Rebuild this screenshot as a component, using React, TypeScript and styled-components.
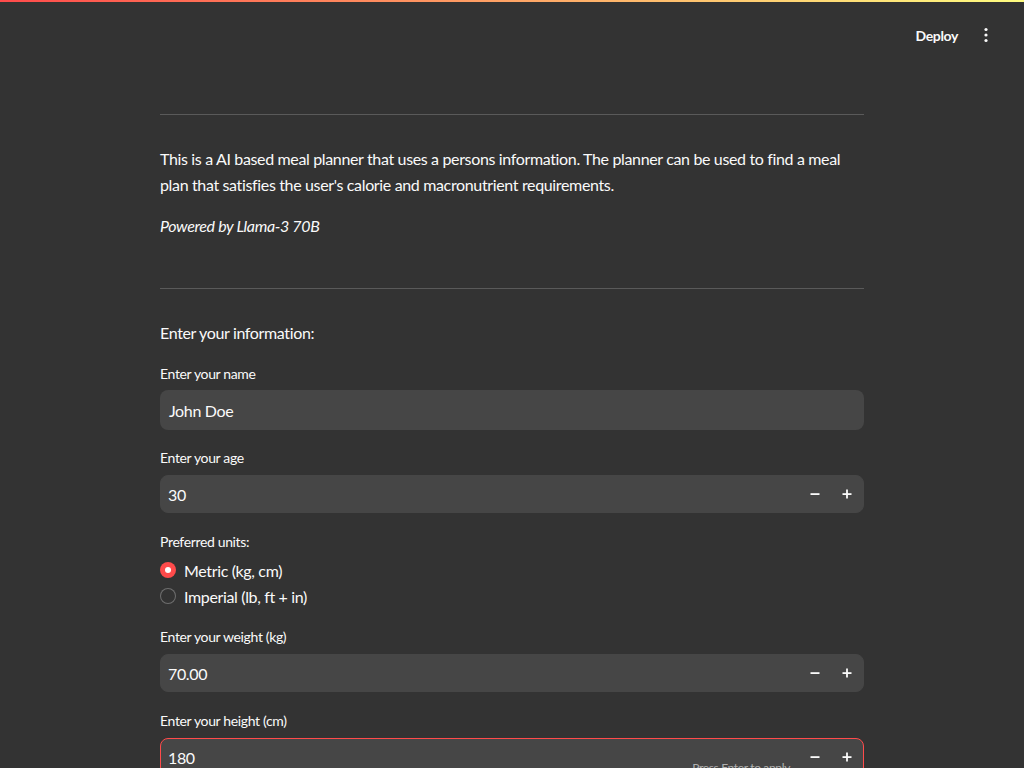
import React, { useState } from "react";
import styled, { createGlobalStyle } from "styled-components";

const GlobalStyle = createGlobalStyle`
  html, body {
    margin: 0;
    padding: 0;
    background: #333333;
    color: #fafafa;
    font-family: "Source Sans Pro", Lato, "Noto Sans", sans-serif;
    letter-spacing: -0.022em;
  }
  * { box-sizing: border-box; }
`;

const Page = styled.div`
  min-height: 768px;
  overflow: hidden;
`;

const Decoration = styled.div`
  height: 2px;
  background: linear-gradient(90deg, #ff4b4b, #fffd80);
`;

const Header = styled.header`
  height: 66px;
  display: flex;
  align-items: center;
  justify-content: flex-end;
  gap: 24px;
  padding-right: 36px;
`;

const DeployButton = styled.button`
  background: none;
  border: none;
  color: #fafafa;
  font-family: inherit;
  letter-spacing: inherit;
  font-size: 14px;
  font-weight: 700;
  padding: 4px 2px;
  cursor: pointer;
`;

const MenuButton = styled.button`
  background: none;
  border: none;
  color: #fafafa;
  padding: 0;
  display: flex;
  align-items: center;
  cursor: pointer;
`;

const Main = styled.main`
  width: 704px;
  margin: 0 auto;
  padding-top: 46px;
`;

const Rule = styled.hr<{ $top?: number }>`
  border: none;
  border-top: 1px solid rgba(250, 250, 250, 0.2);
  margin: ${(p) => p.$top ?? 0}px 0 0;
`;

const Paragraph = styled.p<{ $top: number }>`
  margin: ${(p) => p.$top}px 0 0;
  font-size: 16px;
  line-height: 26px;
`;

const Italic = styled(Paragraph)`
  font-style: italic;
`;

const SectionTitle = styled.p`
  margin: 31px 0 0;
  font-size: 16px;
  line-height: 26px;
`;

const Field = styled.div<{ $top?: number }>`
  display: flex;
  flex-direction: column;
  margin-top: ${(p) => p.$top ?? 17}px;
`;

const Label = styled.label`
  display: block;
  font-size: 14px;
  line-height: 21px;
  margin-bottom: 6px;
`;

const TextBox = styled.div`
  height: 40px;
  border-radius: 8px;
  background: #464646;
  display: flex;
  align-items: center;
  padding: 0 9px;
  font-size: 16px;
`;

const NumberBox = styled.div<{ $focused?: boolean }>`
  position: relative;
  height: 38px;
  margin: 1px 0;
  border-radius: 8px;
  background: #464646;
  border: 1px solid ${(p) => (p.$focused ? "#ff4b4b" : "#464646")};
  display: flex;
  align-items: center;
  font-size: 16px;
`;

const NumberValue = styled.div`
  flex: 1;
  padding-left: 7px;
`;

const StepButton = styled.button`
  width: 32px;
  height: 100%;
  background: none;
  border: none;
  color: #fafafa;
  display: flex;
  align-items: center;
  justify-content: center;
  padding: 0;
  cursor: pointer;
`;

const Hint = styled.span`
  position: absolute;
  right: 73px;
  top: 21px;
  font-size: 12px;
  color: rgba(250, 250, 250, 0.6);
`;

const RadioGroup = styled.div`
  display: flex;
  flex-direction: column;
  margin-top: -1px;
`;

const RadioRow = styled.div`
  display: flex;
  align-items: center;
  gap: 8px;
  height: 26px;
  font-size: 16px;
  cursor: pointer;
`;

const RadioDot = styled.span<{ $checked: boolean }>`
  width: 16px;
  height: 16px;
  border-radius: 50%;
  background: ${(p) => (p.$checked ? "#ff4b4b" : "#333333")};
  border: ${(p) => (p.$checked ? "none" : "1px solid rgba(250,250,250,0.3)")};
  display: flex;
  align-items: center;
  justify-content: center;
  &::after {
    content: "";
    display: ${(p) => (p.$checked ? "block" : "none")};
    width: 6px;
    height: 6px;
    border-radius: 50%;
    background: #fff;
  }
`;

const Minus = () => (
  <svg width="12" height="12" viewBox="0 0 12 12">
    <rect x="1.5" y="5.2" width="9" height="1.8" fill="currentColor" />
  </svg>
);

const Plus = () => (
  <svg width="12" height="12" viewBox="0 0 12 12">
    <rect x="1.5" y="5.2" width="9" height="1.8" fill="currentColor" />
    <rect x="5.1" y="1.5" width="1.8" height="9" fill="currentColor" />
  </svg>
);

const Kebab = () => (
  <svg width="4" height="16" viewBox="0 0 4 16">
    <circle cx="2" cy="2.5" r="1.6" fill="currentColor" />
    <circle cx="2" cy="8" r="1.6" fill="currentColor" />
    <circle cx="2" cy="13.5" r="1.6" fill="currentColor" />
  </svg>
);

const NumberInput = ({ value, focused, hint }: { value: string; focused?: boolean; hint?: boolean }) => (
  <NumberBox $focused={focused}>
    <NumberValue>{value}</NumberValue>
    {hint && <Hint>Press Enter to apply</Hint>}
    <StepButton>
      <Minus />
    </StepButton>
    <StepButton>
      <Plus />
    </StepButton>
  </NumberBox>
);

const App = () => {
  const [units, setUnits] = useState("metric");

  return (
    <Page>
      <GlobalStyle />
      <Decoration />
      <Header>
        <DeployButton>Deploy</DeployButton>
        <MenuButton>
          <Kebab />
        </MenuButton>
      </Header>
      <Main>
        <Rule />
        <Paragraph $top={31}>
          This is a AI based meal planner that uses a persons information. The planner can be used to find a meal
          plan that satisfies the user's calorie and macronutrient requirements.
        </Paragraph>
        <Italic $top={15}>Powered by Llama-3 70B</Italic>
        <Rule $top={49} />
        <SectionTitle>Enter your information:</SectionTitle>
        <Field>
          <Label>Enter your name</Label>
          <TextBox>John Doe</TextBox>
        </Field>
        <Field>
          <Label>Enter your age</Label>
          <NumberInput value="30" />
        </Field>
        <Field>
          <Label>Preferred units:</Label>
          <RadioGroup>
            <RadioRow onClick={() => setUnits("metric")}>
              <RadioDot $checked={units === "metric"} />
              Metric (kg, cm)
            </RadioRow>
            <RadioRow onClick={() => setUnits("imperial")}>
              <RadioDot $checked={units === "imperial"} />
              Imperial (lb, ft + in)
            </RadioRow>
          </RadioGroup>
        </Field>
        <Field>
          <Label>Enter your weight (kg)</Label>
          <NumberInput value="70.00" />
        </Field>
        <Field>
          <Label>Enter your height (cm)</Label>
          <NumberInput value="180" focused hint />
        </Field>
      </Main>
    </Page>
  );
};

export default App;
